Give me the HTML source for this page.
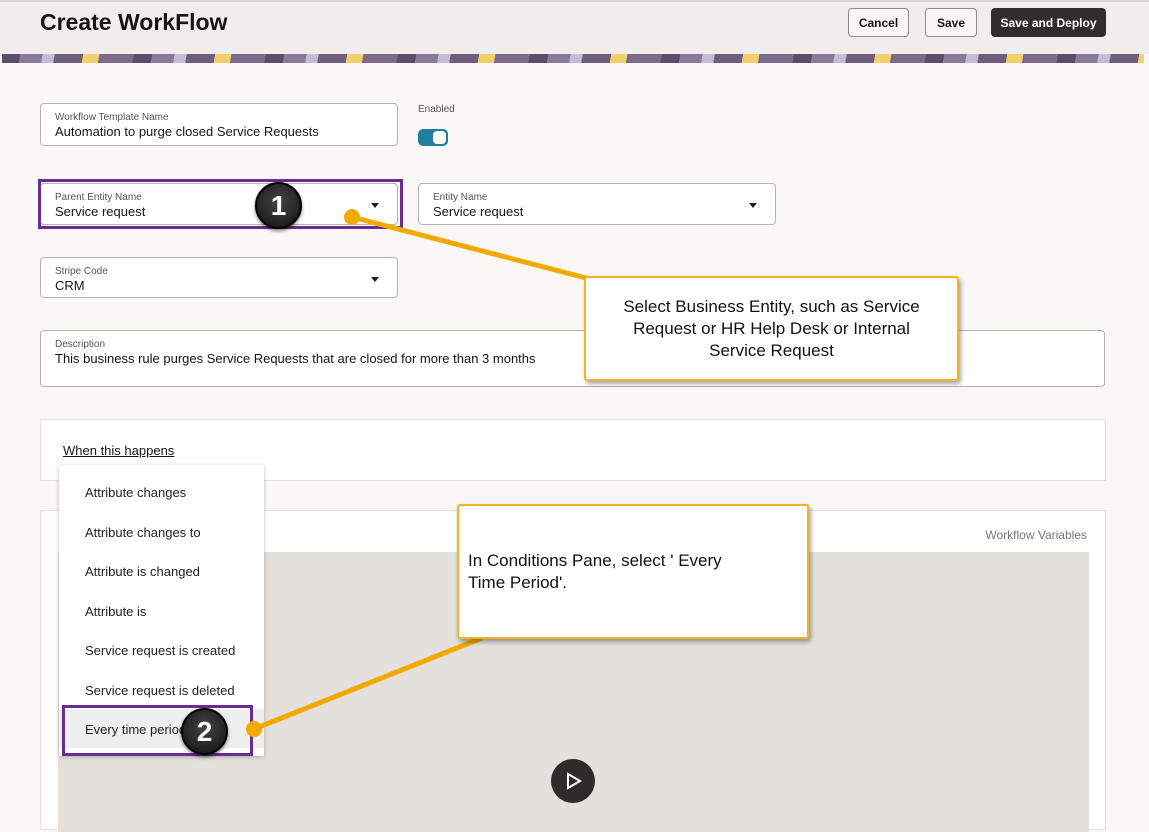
<!DOCTYPE html>
<html><head><meta charset="utf-8"><style>
*{box-sizing:border-box;margin:0;padding:0}
body{width:1149px;height:822px;overflow:hidden;background:#f9f8f6;font-family:"Liberation Sans",sans-serif;color:#161513;position:relative}
.a{position:absolute}
.hdr{left:0;top:0;width:1149px;height:54px;background:#efeeec;border-top:2px solid #d6d4d1}
.btn{top:8px;height:29px;border:1px solid #8f8b86;border-radius:4px;background:#f7f6f4;font-size:12px;font-weight:bold;display:flex;align-items:center;justify-content:center}
.fld{background:#fff;border:1px solid #b6b3ae;border-radius:4px}
.lbl{font-size:10px;color:#555;position:absolute;left:14px;top:8px}
.val{font-size:13px;position:absolute;left:14px;top:20px}
.car{position:absolute;right:18px;top:19px;width:0;height:0;border-left:4px solid transparent;border-right:4px solid transparent;border-top:5px solid #222}
.mi{position:absolute;left:26px;font-size:13px;color:#222}
.call{background:#fff;border:2px solid #f4b324;border-radius:3px;box-shadow:2px 3px 5px rgba(0,0,0,.35);font-size:17px;color:#111}
.num{border-radius:50%;background:radial-gradient(circle at 50% 40%,#444,#111);border:2px solid #000;color:#fff;font-weight:bold;font-size:28px;display:flex;align-items:center;justify-content:center;box-shadow:0 2px 3px rgba(0,0,0,.5)}
</style></head><body>
<div class="a hdr"></div>
<div class="a" style="left:40px;top:9px;font-size:23px;font-weight:bold">Create WorkFlow</div>
<div class="a btn" style="left:848px;width:61px">Cancel</div>
<div class="a btn" style="left:925px;width:52px">Save</div>
<div class="a btn" style="left:991px;width:115px;background:#312d2a;color:#fff;border-color:#312d2a">Save and Deploy</div>
<div class="a" style="left:2px;top:54px;width:1142px;height:9px;background:repeating-linear-gradient(100deg,#5e4c6c 0 18px,#8a7a98 18px 40px,#c9b9d9 40px 52px,#6f5d7d 52px 80px,#f1cf6e 80px 96px,#7b6a8a 96px 130px)"></div>
<div class="a" style="left:2px;top:63px;width:1142px;height:760px;background:#f9f8f6"></div>

<div class="a fld" style="left:40px;top:103px;width:358px;height:43px"><div class="lbl">Workflow Template Name</div><div class="val">Automation to purge closed Service Requests</div></div>
<div class="a" style="left:418px;top:104px;font-size:10px;color:#555">Enabled</div>
<div class="a" style="left:418px;top:129px;width:30px;height:17px;border-radius:5px;background:#227e9e"><div class="a" style="left:15px;top:2px;width:13px;height:13px;border-radius:4px;background:#fff"></div></div>

<div class="a fld" style="left:40px;top:183px;width:358px;height:42px"><div class="lbl">Parent Entity Name</div><div class="val">Service request</div><div class="car"></div></div>
<div class="a" style="left:38px;top:179px;width:365px;height:50px;border:3px solid #6a2c91"></div>
<div class="a fld" style="left:418px;top:183px;width:358px;height:42px"><div class="lbl">Entity Name</div><div class="val">Service request</div><div class="car"></div></div>
<div class="a fld" style="left:40px;top:257px;width:358px;height:41px"><div class="lbl">Stripe Code</div><div class="val">CRM</div><div class="car"></div></div>
<div class="a fld" style="left:40px;top:330px;width:1065px;height:57px"><div class="lbl">Description</div><div class="val">This business rule purges Service Requests that are closed for more than 3 months</div></div>

<div class="a" style="left:40px;top:419px;width:1066px;height:62px;background:#fff;border:1px solid #e4e2df"></div>
<div class="a" style="left:63px;top:443px;font-size:13px;text-decoration:underline">When this happens</div>
<div class="a" style="left:40px;top:510px;width:1066px;height:320px;background:#fff;border:1px solid #e4e2df"></div>
<div class="a" style="right:62px;top:528px;font-size:12px;color:#777">Workflow Variables</div>
<div class="a" style="left:58px;top:552px;width:1031px;height:280px;background:#e4e1dd"></div>
<div class="a" style="left:551px;top:759px;width:44px;height:44px;border-radius:50%;background:#2f2b29"><svg class="a" style="left:14px;top:13px" width="18" height="18" viewBox="0 0 18 18"><path d="M3 2 L15 9 L3 16 Z" fill="none" stroke="#fff" stroke-width="2"/></svg></div>

<div class="a" style="left:59px;top:465px;width:205px;height:291px;background:#fff;box-shadow:0 1px 4px rgba(0,0,0,.25)">
<div class="mi" style="top:20px">Attribute changes</div>
<div class="mi" style="top:60px">Attribute changes to</div>
<div class="mi" style="top:99px">Attribute is changed</div>
<div class="mi" style="top:139px">Attribute is</div>
<div class="mi" style="top:178px">Service request is created</div>
<div class="mi" style="top:218px">Service request is deleted</div>
<div class="a" style="left:0;top:244px;width:205px;height:39px;background:#efefef"></div>
<div class="mi" style="top:257px">Every time period</div>
</div>
<div class="a" style="left:62px;top:705px;width:191px;height:51px;border:3px solid #6a2c91"></div>

<svg class="a" style="left:0;top:0" width="1149" height="822">
<line x1="352" y1="217" x2="586" y2="278" stroke="#f4a900" stroke-width="5"/>
<circle cx="352" cy="217" r="8" fill="#f4a900"/>
<line x1="254" y1="729" x2="482" y2="638" stroke="#f4a900" stroke-width="5"/>
<circle cx="254" cy="729" r="8" fill="#f4a900"/>
</svg>

<div class="a call" style="left:584px;top:276px;width:375px;height:105px;text-align:center;padding-top:18px;line-height:22px">Select Business Entity, such as Service<br>Request or HR Help Desk or Internal<br>Service Request</div>
<div class="a call" style="left:457px;top:504px;width:352px;height:135px;padding:44px 0 0 9px;line-height:22px">In Conditions Pane, select ' Every<br>Time Period'.</div>

<div class="a num" style="left:255px;top:182px;width:47px;height:47px">1</div>
<div class="a num" style="left:181px;top:708px;width:47px;height:47px">2</div>
</body></html>
